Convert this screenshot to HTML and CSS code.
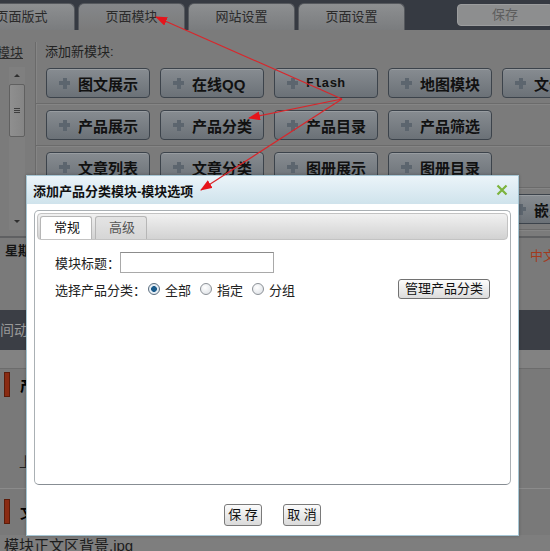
FILE: index.html
```html
<!DOCTYPE html>
<html lang="zh-CN">

<head>
    <meta charset="UTF-8">
    <title>页面模块 - 添加产品分类模块</title>
    <link rel="stylesheet" href="styles.css">
</head>

<body>
    <div class="page">
        <div class="topbar">
            <div class="tabs">
                <div class="tab">页面版式</div>
                <div class="tab active">页面模块</div>
                <div class="tab">网站设置</div>
                <div class="tab">页面设置</div>
            </div>
            <div class="save-top">保存</div>
        </div>

        <div class="workspace">
            <div class="sidebar">
                <a class="side-link">模块</a>
                <div class="scrollbar">
                    <div class="sb-up"></div>
                    <div class="sb-thumb"><span class="grip"></span></div>
                    <div class="sb-track"></div>
                    <div class="sb-down"></div>
                </div>
            </div>
            <div class="modules">
                <div class="modules-title">添加新模块:</div>
                <div class="module-row">
                    <div class="mod-btn"><span class="plus"></span>图文展示</div>
                    <div class="mod-btn"><span class="plus"></span>在线QQ</div>
                    <div class="mod-btn"><span class="plus"></span><span class="mono">Flash</span></div>
                    <div class="mod-btn"><span class="plus"></span>地图模块</div>
                    <div class="mod-btn"><span class="plus"></span>文件下载</div>
                </div>
                <div class="module-row">
                    <div class="mod-btn"><span class="plus"></span>产品展示</div>
                    <div class="mod-btn"><span class="plus"></span>产品分类</div>
                    <div class="mod-btn"><span class="plus"></span>产品目录</div>
                    <div class="mod-btn"><span class="plus"></span>产品筛选</div>
                </div>
                <div class="module-row">
                    <div class="mod-btn"><span class="plus"></span>文章列表</div>
                    <div class="mod-btn"><span class="plus"></span>文章分类</div>
                    <div class="mod-btn"><span class="plus"></span>图册展示</div>
                    <div class="mod-btn"><span class="plus"></span>图册目录</div>
                </div>
                <div class="module-row">
                    <div class="mod-btn"><span class="plus"></span>留言板</div>
                    <div class="mod-btn"><span class="plus"></span>友情链接</div>
                    <div class="mod-btn"><span class="plus"></span>网站公告</div>
                    <div class="mod-btn"><span class="plus"></span>搜索框</div>
                    <div class="mod-btn"><span class="plus"></span>嵌入代码</div>
                </div>
            </div>
        </div>

        <div class="infobar">
            <span class="weekday">星期</span>
            <span class="lang">中文</span>
        </div>

        <div class="darkband">间动</div>

        <div class="section">
            <div class="section-head"></div>
            <div class="block-title"><span class="red-bar"></span>产</div>
            <div class="block-body">上</div>
            <div class="block-title"><span class="red-bar"></span>文</div>
        </div>

        <div class="filebar">模块正文区背景.jpg</div>

        <!-- modal dialog -->
        <div class="dialog">
            <div class="dialog-title">
                <span>添加产品分类模块-模块选项</span>
                <svg class="close" width="12" height="12" viewBox="0 0 12 12">
                    <path d="M1.5 1.5 L10.5 10.5 M10.5 1.5 L1.5 10.5" stroke="#7cb33d" stroke-width="2.2" />
                </svg>
            </div>
            <div class="dialog-body">
                <div class="panel">
                    <div class="tabstrip">
                        <div class="dtab active">常规</div>
                        <div class="dtab">高级</div>
                    </div>
                    <div class="form">
                        <div class="form-row">
                            <span class="label">模块标题：</span>
                            <span class="text-input"></span>
                        </div>
                        <div class="form-row">
                            <span class="label">选择产品分类：</span>
                            <span class="radio checked"></span>全部
                            <span class="radio"></span>指定
                            <span class="radio"></span>分组
                            <span class="manage-btn">管理产品分类</span>
                        </div>
                    </div>
                </div>
                <div class="dialog-foot">
                    <span class="dbtn">保 存</span>
                    <span class="dbtn">取 消</span>
                </div>
            </div>
        </div>

        <!-- annotation arrows -->
        <svg class="arrows" width="550" height="551">
            <defs>
                <marker id="head" markerWidth="12" markerHeight="9" refX="11" refY="4.5" orient="auto"
                    markerUnits="userSpaceOnUse">
                    <path d="M0,0 L12,4.5 L0,9 z" fill="#e5141b" />
                </marker>
            </defs>
            <line x1="342" y1="99" x2="156" y2="17" marker-end="url(#head)" />
            <line x1="342" y1="99" x2="249" y2="118" marker-end="url(#head)" />
            <line x1="342" y1="99" x2="201" y2="190" marker-end="url(#head)" />
        </svg>
    </div>
</body>

</html>
```

FILE: styles.css
```css
* {
    box-sizing: border-box;
}

body {
    margin: 0;
    font-family: "Liberation Sans", "Noto Sans CJK SC", sans-serif;
    font-size: 13px;
    background-color: #777;
    color: #222;
}

.page {
    position: relative;
    width: 550px;
    height: 551px;
    overflow: hidden;
}

/* top tab bar */
.topbar {
    height: 30px;
    background-color: #363a42;
    display: flex;
    justify-content: space-between;
}

.tabs {
    display: flex;
    align-items: flex-end;
    gap: 3px;
    margin-left: -32px;
}

.tab {
    width: 107px;
    height: 27px;
    line-height: 26px;
    text-align: center;
    background: linear-gradient(#8d8f91, #7a7c7e);
    border: 1px solid #55585d;
    border-bottom: none;
    border-radius: 6px 6px 0 0;
    color: #2a2a2a;
}

.tab.active {
    background: linear-gradient(#85878a, #7b7b7b);
}

.save-top {
    margin-top: 4px;
    margin-right: -3px;
    width: 96px;
    height: 22px;
    line-height: 20px;
    text-align: center;
    background-color: #8d8e8f;
    border: 1px solid #9c9d9e;
    border-radius: 4px;
    color: #5d5d5d;
}

/* module picker */
.workspace {
    display: flex;
    height: 208px;
    background-color: #7b7b7b;
    border-bottom: 2px solid #5f6062;
    overflow: hidden;
}

.sidebar {
    flex: none;
    width: 36px;
    margin-top: 12px;
    padding-left: 9px;
    border-right: 1px solid #6a6a6a;
    box-shadow: 1px 0 0 #858585;
    overflow: hidden;
}

.side-link {
    display: block;
    margin-left: -12px;
    padding-top: 3px;
    line-height: 16px;
    color: #2a2a2a;
    text-decoration: underline;
    white-space: nowrap;
}

.scrollbar {
    margin-top: 6px;
    width: 16px;
    height: 163px;
    display: flex;
    flex-direction: column;
    background-color: #7f7f7f;
}

.sb-up,
.sb-down {
    height: 17px;
    display: flex;
    justify-content: center;
    align-items: center;
}

.sb-up::before,
.sb-down::before {
    content: "";
    border-left: 3px solid transparent;
    border-right: 3px solid transparent;
}

.sb-up::before {
    border-bottom: 3px solid #2f2f2f;
}

.sb-down::before {
    border-top: 3px solid #2f2f2f;
}

.sb-thumb {
    height: 53px;
    border: 1px solid #606060;
    border-radius: 2px;
    background: linear-gradient(90deg, #8f8f8f, #858585);
    display: flex;
    justify-content: center;
    align-items: center;
}

.grip {
    width: 6px;
    height: 5px;
    border-top: 1px solid #3e3e3e;
    border-bottom: 1px solid #3e3e3e;
    background: linear-gradient(#3e3e3e, #3e3e3e) center/6px 1px no-repeat;
}

.sb-track {
    flex: 1;
}

.modules {
    flex: 1;
    padding-top: 14px;
    min-width: 0;
}

.modules-title {
    padding-left: 9px;
    height: 16px;
    line-height: 16px;
    margin-bottom: 8px;
    color: #222;
}

.module-row {
    display: flex;
    gap: 10px;
    padding: 0 0 5px 10px;
    margin-bottom: 6px;
    border-bottom: 1px solid #6b6b6b;
    box-shadow: 0 1px 0 #858585;
}

.mod-btn {
    flex: none;
    width: 104px;
    height: 30px;
    display: flex;
    align-items: center;
    padding-left: 12px;
    border: 1px solid #3c434b;
    border-radius: 4px;
    background: linear-gradient(#878c91, #6b7177);
    box-shadow: inset 0 1px 0 rgba(255, 255, 255, 0.15);
    font-size: 15px;
    font-weight: bold;
    color: #111;
    white-space: nowrap;
}

.plus {
    flex: none;
    width: 11px;
    height: 11px;
    margin-right: 8px;
    background:
        linear-gradient(#5c656e, #5c656e) center/11px 4px no-repeat,
        linear-gradient(#5c656e, #5c656e) center/4px 11px no-repeat;
}

.mono {
    font-family: "Liberation Mono", monospace;
    font-size: 13px;
}

/* lower page parts */
.infobar {
    height: 72px;
    display: flex;
    justify-content: space-between;
    padding: 5px 0 0 5px;
    background-color: #7a7a7a;
}

.weekday {
    font-size: 13px;
    font-weight: bold;
    color: #151515;
    line-height: 16px;
}

.lang {
    margin-top: 5px;
    margin-right: -6px;
    font-size: 13px;
    color: #a23a1e;
    line-height: 16px;
}

.darkband {
    height: 40px;
    line-height: 40px;
    background-color: #3b3e45;
    color: #9a9a9a;
    font-size: 14px;
}

.section {
    height: 185px;
    background-color: #797979;
}

.section-head {
    height: 19px;
    background-color: #828282;
    border-bottom: 1px solid #6c6c6c;
}

.block-title {
    display: flex;
    align-items: center;
    gap: 10px;
    height: 25px;
    margin-top: 3px;
    padding-left: 4px;
    font-size: 15px;
    font-weight: bold;
    color: #000;
}

.block-title:last-child {
    margin-top: 10px;
}

.red-bar {
    width: 6px;
    height: 25px;
    background-color: #8a2b12;
    border: 1px solid #5c1b09;
}

.block-body {
    height: 92px;
    display: flex;
    align-items: flex-end;
    padding: 0 0 17px 19px;
    border-bottom: 1px solid #8b8b8b;
    font-size: 14px;
    color: #222;
}

.filebar {
    height: 16px;
    line-height: 18px;
    padding: 2px 0 0 4px;
    background-color: #7e7e7e;
    font-size: 15px;
    color: #1c1c1c;
    white-space: nowrap;
    overflow: hidden;
}

/* dialog */
.dialog {
    position: absolute;
    left: 26px;
    top: 175px;
    width: 493px;
    height: 361px;
    display: flex;
    flex-direction: column;
    background-color: #fff;
    border: 1px solid #a6c6d4;
    box-shadow: 0 0 3px rgba(0, 0, 0, 0.25);
}

.dialog-title {
    flex: none;
    height: 28px;
    display: flex;
    justify-content: space-between;
    align-items: center;
    padding: 0 10px 0 6px;
    background: linear-gradient(#ebf4f9, #cfe3ec);
    font-size: 13px;
    font-weight: bold;
    color: #111;
}

.dialog-body {
    flex: 1;
    padding: 6px 7px 0;
}

.panel {
    height: 275px;
    padding: 2px;
    border: 1px solid #aab0b4;
    border-bottom-color: #878d93;
    border-radius: 5px;
}

.tabstrip {
    height: 27px;
    display: flex;
    align-items: flex-end;
    gap: 3px;
    padding-left: 2px;
    border: 1px solid #c3c3c3;
    border-radius: 4px;
    background: linear-gradient(#f1f1f1, #d2d2d2);
}

.dtab {
    width: 52px;
    height: 23px;
    line-height: 22px;
    padding-left: 13px;
    border: 1px solid #b6b6b6;
    border-bottom: none;
    border-radius: 3px 3px 0 0;
    background: linear-gradient(#e4e4e4, #d6d6d6);
    color: #555;
}

.dtab.active {
    background: #fff;
    color: #111;
}

.form {
    padding: 12px 18px 0 18px;
}

.form-row {
    display: flex;
    align-items: center;
    height: 21px;
    color: #222;
}

.form-row + .form-row {
    margin-top: 6px;
    height: 20px;
}

.label {
    white-space: nowrap;
}

.text-input {
    width: 154px;
    height: 21px;
    border: 1px solid #a9a9a9;
    border-top-color: #8c8c8c;
    background: #fff;
}

.radio {
    flex: none;
    width: 12px;
    height: 12px;
    margin: 0 5px 0 9px;
    border: 1px solid #8c9197;
    border-radius: 50%;
    background: radial-gradient(circle at 40% 35%, #fff, #d9dde2);
}

.label + .radio {
    margin-left: 2px;
}

.radio.checked {
    border-color: #5b6d7e;
    background: radial-gradient(circle, #1b5c8c 0 2.6px, #e6eef5 3.2px);
}

.manage-btn {
    margin-left: auto;
    height: 20px;
    line-height: 18px;
    padding: 0 6px;
    border: 1px solid #727272;
    border-radius: 3px;
    background: linear-gradient(#fdfdfd, #dcdcdc);
    color: #111;
}

.dialog-foot {
    display: flex;
    justify-content: center;
    gap: 21px;
    padding-top: 19px;
}

.dbtn {
    width: 38px;
    height: 22px;
    line-height: 20px;
    text-align: center;
    border: 1px solid #7a7a7a;
    border-radius: 3px;
    background: linear-gradient(#fbfbfb, #dadada);
    color: #111;
    white-space: pre;
}

/* annotation overlay */
.arrows {
    position: absolute;
    left: 0;
    top: 0;
    pointer-events: none;
}

.arrows line {
    stroke: #d9262b;
    stroke-width: 1.2;
}
```
